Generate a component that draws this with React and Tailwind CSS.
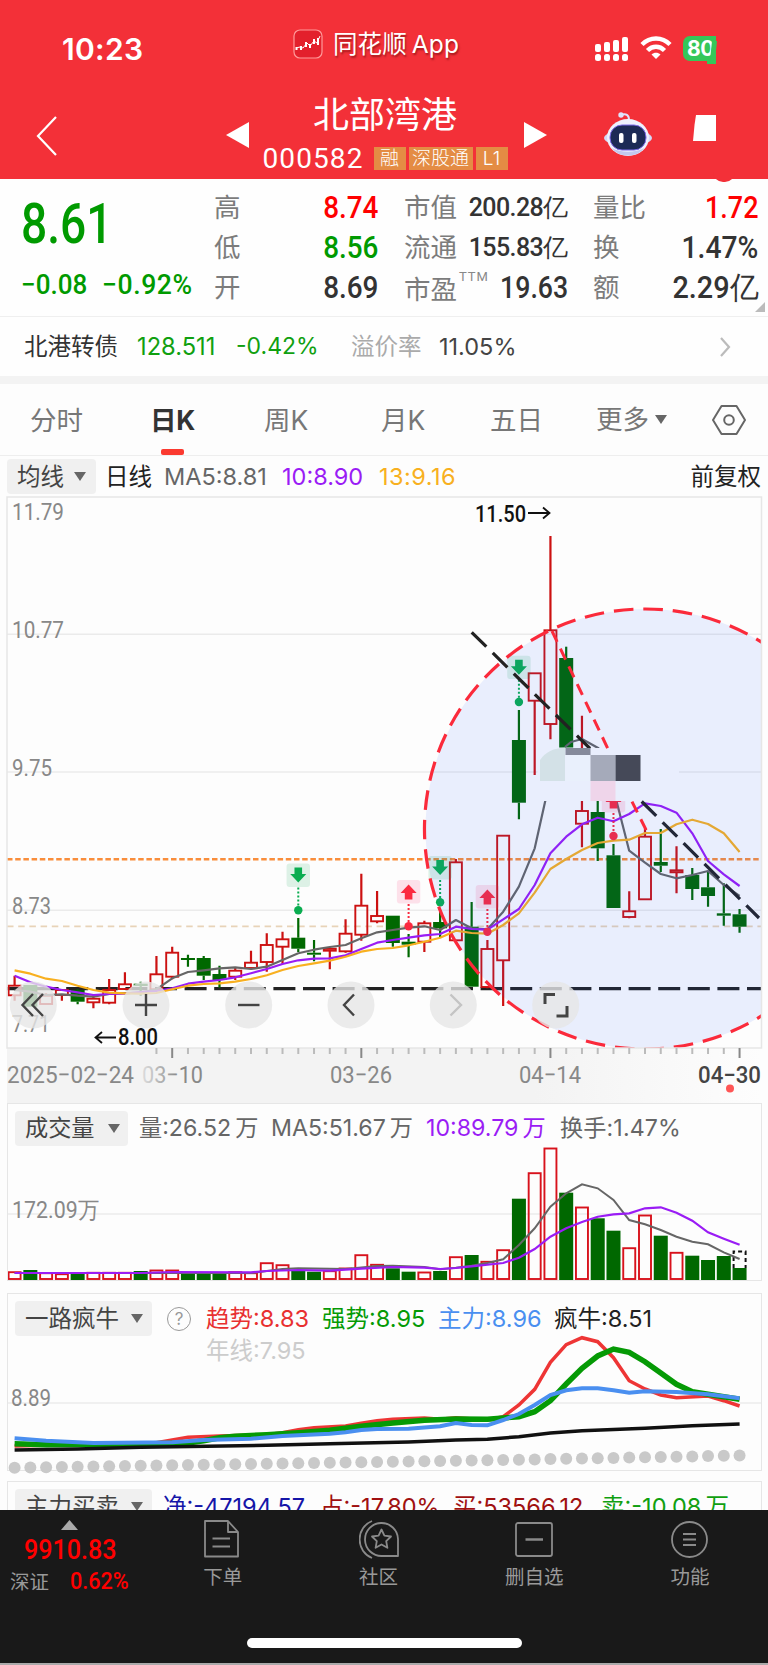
import React from 'react';

const RED = '#cc1111';
const GREEN = '#006800';

// one x slot per trading day
const px = (i) => 14.6 + i * 15.76;

// [up?, high, bodyTop, bodyBottom, low]
const candles = [
  [1, 975.7, 985.7, 995.3, 1000.7],
  [0, 985, 985, 1006.7, 1006.7],
  [1, 993.3, 995.7, 1004, 1004],
  [1, 989.3, 990, 995, 1000.7],
  [0, 989.3, 990, 1001.7, 1004.3],
  [1, 994, 998.7, 1002.3, 1008.3],
  [1, 979, 990, 1002.7, 1004.3],
  [1, 972.3, 984.3, 989, 990],
  [0, 981.7, 983.7, 986, 995.7],
  [1, 956, 974.3, 989.3, 991],
  [1, 946.7, 952.7, 976.7, 979.3],
  [0, 954.7, 958, 960, 966.7],
  [0, 956, 958, 975.7, 980],
  [0, 965.7, 974, 980, 987.7],
  [1, 967.3, 970.7, 976.7, 980],
  [1, 950.7, 962.7, 968, 969.3],
  [1, 933.3, 945, 962, 971.7],
  [1, 931.7, 939.3, 946.7, 964],
  [0, 918, 937.7, 948.7, 952],
  [0, 940, 952.7, 954.7, 961.3],
  [1, 947.3, 948.7, 950.7, 969.3],
  [1, 919.3, 933.7, 951.3, 952.7],
  [1, 873.7, 905.7, 934.7, 940.7],
  [1, 891, 916, 921.3, 923.3],
  [0, 915.7, 915.7, 943, 946.7],
  [0, 934, 941.7, 944.7, 957.3],
  [1, 920.7, 923.3, 941.7, 952],
  [0, 910, 922, 928.3, 937.3],
  [1, 859, 862.3, 940.3, 941.7],
  [0, 902, 926.7, 986.7, 986.7],
  [1, 940, 949, 987, 988.3],
  [1, 835.7, 835.7, 960.3, 1006],
  [0, 710, 740, 802.7, 819.3],
  [1, 673.3, 673.3, 700.7, 775],
  [1, 536, 630.3, 724, 739.3],
  [0, 646.7, 658, 747.5, 747.5],
  [1, 715.7, 811, 823.7, 847.3],
  [0, 801, 812, 848.3, 861],
  [0, 844, 855.3, 908, 908],
  [1, 891.3, 911.3, 917, 918.3],
  [1, 828.3, 836.7, 899.3, 900],
  [0, 829, 862, 865.7, 872],
  [1, 846.3, 870.3, 872.3, 893.3],
  [0, 868, 875, 889, 900],
  [0, 871.7, 887.3, 896, 906.7],
  [0, 883.3, 913.3, 915.7, 925.7],
  [0, 909, 914.3, 926.7, 932.7],
];

const ma5 = [990, 991.7, 995, 994.3, 995.7, 996.7, 994, 993, 992.7, 989.3, 978.3, 972, 970.3, 968.3, 967.3, 969, 966.7, 960, 953.3, 949.7, 947, 945, 938.3, 932.3, 930, 927.7, 926.3, 930, 920, 928.3, 929.3, 911.7, 886.7, 848.3];
const ma5Tail = [850.7, 862.7, 874, 878.3, 875, 871, 885, 896];
const ma10 = [975.7, 982.3, 986.7, 990, 992.3, 995, 994, 993.7, 992, 991, 988.3, 983.7, 981.7, 980, 977.3, 973.3, 969, 964, 960.3, 958.7, 958.3, 955.3, 949, 942.7, 940, 937.7, 935.3, 934, 926.7, 929, 929.7, 919.3, 909, 885, 853.3, 836.7, 824.3, 817.7, 821.3, 814, 803.3, 806, 812.7, 833.3, 861, 874.3, 886];
const ma13 = [970.3, 973.7, 978.7, 981, 985.7, 990, 992.7, 993.3, 993.7, 993, 989.3, 985.7, 984, 983.3, 981.7, 979, 975.3, 970, 966, 963.3, 960.7, 956.7, 951.7, 949, 948, 945.3, 941.7, 937.7, 930.7, 933, 933.7, 925, 913.3, 892.7, 869, 859, 850, 843, 840.7, 839.7, 833, 833, 824.3, 819.7, 824, 833.3, 852];

const signals = [
  { i: 18, box: 863.5, dot: 910.3, buy: false },
  { i: 27, box: 856, dot: 902.3, buy: false },
  { i: 32, box: 655.7, dot: 702, buy: false },
  { i: 25, box: 880, dot: 926.3, buy: true },
  { i: 30, box: 885, dot: 931.7, buy: true },
  { i: 38, box: 789, dot: 836, buy: true },
];

const volumes = [8.3, 10, 7.3, 6.3, 7, 7.7, 7.7, 7.7, 9, 10, 10, 7.7, 7.7, 7.7, 8.3, 7.3, 17.3, 15.3, 9.3, 8.3, 9.3, 12, 25.3, 15.7, 11.7, 8.3, 8, 9, 23.3, 25, 18.7, 30.3, 81.3, 107.3, 132, 87.3, 73, 61.7, 49.3, 32.3, 65, 44.3, 27.7, 24.3, 20, 24, 12];
const volMa5 = [[0, 7], [15, 7], [16, 9], [17, 11], [18, 11.7], [21, 11], [23, 14], [24, 14.3], [26, 13], [27, 10.7], [28, 12.3], [29, 14.3], [30, 17], [31, 20.7], [32, 35], [33, 51.7], [34, 73.3], [35, 86.7], [36, 95.7], [37, 91.7], [38, 80], [39, 60], [40, 55.7], [41, 50], [42, 43.3], [43, 38.3], [44, 35.7], [45, 27.7], [46, 21]];
const volMa10 = [[0, 7], [8, 7], [10, 8], [15, 7.7], [16, 9], [18, 10], [20, 9.3], [22, 11.3], [24, 13], [26, 12.3], [27, 11], [28, 12], [29, 13.7], [31, 17], [32, 22.3], [33, 31], [34, 43.3], [35, 51.7], [36, 58], [37, 63.3], [38, 65.7], [39, 66.7], [40, 71.7], [41, 72.7], [42, 67.3], [43, 59.3], [44, 47.7], [45, 41.3], [46, 35.3]];

const trend = [[0, 1446], [5, 1444], [9, 1442.7], [10, 1440], [11, 1437.3], [13, 1436], [16, 1434.7], [17, 1432.7], [18, 1429.7], [19, 1427.7], [21, 1426], [22, 1423.3], [23, 1420.7], [24, 1419.3], [26, 1418], [27, 1419.3], [28, 1417.7], [30, 1420], [31, 1416.7], [32, 1405], [33, 1389.3], [34, 1362.3], [35, 1344.7], [36, 1337.7], [37, 1341.7], [38, 1357.7], [39, 1380.7], [40, 1389], [41, 1395], [42, 1397.7], [44, 1396], [45, 1400.7], [46, 1406]];
const strong = [[0, 1443.7], [2, 1444.7], [8, 1444], [11, 1443], [12, 1440.7], [13, 1437.7], [14, 1436.3], [16, 1434.7], [18, 1432.7], [20, 1430.3], [22, 1426.3], [24, 1423], [26, 1420.3], [28, 1419], [30, 1419.3], [32, 1416.7], [33, 1411.7], [34, 1400.7], [35, 1384], [36, 1368.3], [37, 1356], [38, 1349], [39, 1352.3], [40, 1361.7], [41, 1373], [42, 1384.3], [43, 1391.7], [44, 1394.3], [45, 1396.7], [46, 1399.3]];
const main = [[0, 1438.3], [2, 1440.7], [4, 1442.3], [5, 1443], [10, 1442.3], [12, 1440], [15, 1438.7], [17, 1436], [20, 1433.7], [21, 1432.3], [22, 1430], [23, 1429], [25, 1428.7], [27, 1426.3], [28, 1423], [29, 1425], [30, 1425.3], [31, 1420], [32, 1414], [33, 1405], [34, 1395], [35, 1390.3], [36, 1388.3], [37, 1388.3], [38, 1390.3], [39, 1392.7], [40, 1391.3], [42, 1392], [44, 1394.3], [46, 1398.3]];
const bull = [[0, 1450], [4, 1449], [8, 1447.3], [16, 1445.3], [20, 1443.7], [25, 1442], [28, 1440], [30, 1439.3], [32, 1436.7], [34, 1433], [36, 1430.7], [40, 1428.3], [43, 1425.7], [46, 1424]];

const path = (ys, start = 0) => ys.map((y, i) => `${px(i + start).toFixed(1)},${y}`).join(' ');
const pairs = (pts) => pts.map(([i, y]) => `${px(i).toFixed(1)},${y}`).join(' ');
const volPairs = (pts) => pts.map(([i, h]) => `${px(i).toFixed(1)},${1280 - h}`).join(' ');

const num = 'font-[Roboto,sans-serif]';

// condensed figures, pinned to the left or right edge of their cell
function Num({ children, right, squeeze = 'scale-x-[0.9]', className = '' }) {
  return (
    <span className={`${num} inline-block whitespace-nowrap ${squeeze} ${right ? 'origin-right' : 'origin-left'} ${className}`}>
      {children}
    </span>
  );
}

function Caret({ className = '' }) {
  return (
    <svg viewBox="0 0 12 9" className={`shrink-0 w-[12px] h-[9px] ${className}`}>
      <path d="M0 0H12L6 9Z" fill="#666" />
    </svg>
  );
}

// the 万 unit stands a little apart from its figure
function Wan() {
  return <span className="ml-[4px]">万</span>;
}

function StatusBar() {
  return (
    <div className="flex items-start h-[84px] pt-[29px] text-white">
      <div className="w-[231px] ml-[62px] pt-[1px] text-[30px] leading-[38px] font-semibold tracking-[0.3px]">10:23</div>
      <svg viewBox="0 0 30 30" className="w-[30px] h-[30px] shrink-0">
        <rect x="1" y="1" width="28" height="28" rx="6" fill="#e3202c" stroke="#ff9a9a" strokeWidth="1.2" />
        <path d="M3 19L7 18L10 19L14 14L17 17L21 12L24 14L27 7" fill="none" stroke="#fff" strokeWidth="1" />
        <path d="M3.500 18v3M8 17v4M13 13v5M17 15v4M21 10v5M25 9v7" stroke="#fff" strokeWidth="2" />
      </svg>
      <div className="w-[261px] ml-[10px] text-[24.5px] leading-[31px] tracking-[0.1px] [text-shadow:1px_2px_2px_rgba(80,0,0,0.5)]">
        同花顺<span className="ml-[5px]">App</span>
      </div>
      <svg viewBox="0 0 36 26" className="w-[36px] h-[26px] mt-[7px] shrink-0" fill="#fff">
        <rect x="1" y="8" width="6" height="8" rx="2" />
        <rect x="10" y="6" width="6" height="10" rx="2" />
        <rect x="19" y="4" width="6" height="12" rx="2" />
        <rect x="28" y="1" width="6" height="15" rx="2" />
        <rect x="1" y="18" width="6" height="7" rx="2.5" />
        <rect x="10" y="18" width="6" height="7" rx="2.5" />
        <rect x="19" y="18" width="6" height="7" rx="2.5" />
        <rect x="28" y="18" width="6" height="7" rx="2.5" />
      </svg>
      <svg viewBox="0 0 32 25" className="w-[32px] h-[25px] ml-[10px] mt-[6px] shrink-0" fill="none" stroke="#fff" strokeWidth="4.5">
        <path d="M2 9.5C10 1.500 22 1.500 30 9.500" />
        <path d="M7.500 15.500C12.500 10.500 19.500 10.500 24.500 15.500" />
        <path d="M16 24L11.500 19.500C14 17.300 18 17.300 20.500 19.500Z" fill="#fff" stroke="none" />
      </svg>
      <div className="relative w-[33px] h-[25px] ml-[11px] mt-[7px] rounded-l-[7px] bg-[#35c759] pl-[4px] text-[21px] leading-[25px] font-bold tracking-[-0.5px]">
        80
        <div className="absolute right-0 top-[5px] w-[5px] h-[19px] bg-[#35c759] -skew-x-6" />
        <div className="absolute right-0 top-[24px] w-[9px] h-[4px] bg-[#35c759]" />
      </div>
    </div>
  );
}

function TitleBar() {
  return (
    <div className="relative flex items-start h-[96px] text-white">
      <svg viewBox="0 0 24 42" className="w-[24px] h-[42px] ml-[35px] mt-[31px] shrink-0">
        <path d="M21 2L3 21L21 40" fill="none" stroke="#fff" strokeWidth="2.2" />
      </svg>
      <svg viewBox="0 0 23 26" className="w-[23px] h-[26px] ml-[167px] mt-[38px] shrink-0"><path d="M23 0V26L0 13Z" fill="#fff" /></svg>
      <div className="w-[275px] flex flex-col items-center pr-[3px]">
        <div className="mt-[9px] text-[36px] leading-[44px]">北部湾港</div>
        <div className="flex items-center gap-[3px] mt-[10px] text-[19px] leading-[23px]">
          <span className={`w-[108px] text-[28px] tracking-[1.1px] ${num}`}>000582</span>
          <span className="w-[32px] h-[23px] bg-[#e48c44] text-center font-light">融</span>
          <span className="w-[64px] h-[23px] bg-[#e48c44] text-center font-light">深股通</span>
          <span className="w-[32px] h-[23px] bg-[#e48c44] text-center font-light">L1</span>
        </div>
      </div>
      <svg viewBox="0 0 23 26" className="w-[23px] h-[26px] mt-[38px] shrink-0"><path d="M0 0V26L23 13Z" fill="#fff" /></svg>
      <svg viewBox="0 0 48 46" className="w-[48px] h-[46px] ml-[57px] mt-[27px] shrink-0">
        <path d="M17 4C22 2 25 4 25 9" fill="none" stroke="#dfe3fb" strokeWidth="2" />
        <circle cx="17" cy="4" r="2.700" fill="#dfe3fb" />
        <ellipse cx="24" cy="27" rx="24" ry="8" fill="#d3d9f7" />
        <ellipse cx="24" cy="26.500" rx="21" ry="18.500" fill="#eef1fd" />
        <path d="M8 37C14 47 34 47 40 37C32 42 16 42 8 37Z" fill="#c3c8ef" />
        <rect x="6" y="14" width="36" height="25" rx="12" fill="#1c2a55" stroke="#7c6be8" strokeWidth="1" />
        <rect x="15" y="22" width="4.500" height="10" rx="2" fill="#fff" />
        <rect x="28" y="22" width="4.500" height="10" rx="2" fill="#fff" />
      </svg>
      <svg viewBox="0 0 23 26" className="w-[23px] h-[26px] ml-[41px] mt-[31px] shrink-0"><path d="M3 0H23V26H0L1.500 10Z" fill="#fff" /></svg>
      <div className="absolute left-[713px] bottom-[-2px] w-[22px] h-[10px] rounded-b-full bg-[#f33038]" />
    </div>
  );
}

function Row({ label, value, className, lw, sup, small, squeeze }) {
  return (
    <div className="flex items-center h-[40px] whitespace-nowrap">
      <span className={`text-[26.5px] text-[#7c7c7c] font-normal ${lw} ${sup ? 'pt-[3px]' : ''}`}>{label}</span>
      {sup && <span className={`${num} mb-[22px] text-[13px] text-[#888] font-normal tracking-[1px]`}>{sup}</span>}
      <span className={`flex-1 flex justify-end ${className}`}>
        {small
          ? <span className={`${num} text-[25px] tracking-[-0.6px] -mr-[1px] pr-[1.500px]`}>{value}</span>
          : <Num right squeeze={squeeze} className="text-[31px]">{value}</Num>}
      </span>
    </div>
  );
}

function Quote() {
  return (
    <div className="relative shrink-0 flex h-[138px] pt-[9px] bg-[#fefefe] border-b border-[#efefef]">
      <div className="w-[192px] pl-[21px] text-[#009a00]">
        <div className="h-[72px] leading-[72px]"><Num squeeze="scale-x-[0.84]" className="text-[55px] font-medium">8.61</Num></div>
        <div className="flex text-[28px] leading-[48px]">
          <div className="w-[82px]"><Num squeeze="scale-x-[0.93]" className="font-medium">−0.08</Num></div>
          <div className="w-[90px]"><Num squeeze="scale-x-[0.95]" className="font-medium tracking-[0.6px]">−0.92%</Num></div>
        </div>
      </div>
      <div className="w-[164px] ml-[22px] font-medium">
        <Row label="高" value="8.74" lw="w-[27px]" className="text-[#f00]" />
        <Row label="低" value="8.56" lw="w-[27px]" className="text-[#009a00]" />
        <Row label="开" value="8.69" lw="w-[27px]" className="text-[#333]" />
      </div>
      <div className="w-[164px] ml-[26px] font-medium text-[#333]">
        <Row label="市值" value="200.28亿" lw="w-[53px]" small />
        <Row label="流通" value="155.83亿" lw="w-[53px]" small />
        <Row label="市盈" value="19.63" lw="w-[57px]" sup="TTM" squeeze="scale-x-[0.86]" />
      </div>
      <div className="w-[165px] ml-[25px] font-medium">
        <Row label="量比" value="1.72" lw="w-[53px]" className="text-[#f00]" squeeze="scale-x-[0.87]" />
        <Row label="换" value="1.47%" lw="w-[27px]" className="text-[#333]" squeeze="scale-x-[0.91]" />
        <Row label="额" value="2.29亿" lw="w-[27px]" className="text-[#333]" squeeze="scale-x-[0.93]" />
      </div>
      <svg viewBox="0 0 10 10" className="absolute right-[3px] bottom-[4px] w-[10px] h-[10px]"><path d="M10 0V10H0Z" fill="#bbb" /></svg>
    </div>
  );
}

function Bond() {
  return (
    <div className="shrink-0 flex items-center h-[59px] pl-[24px] text-[23.500px] bg-[#fefefe] whitespace-nowrap">
      <span className="w-[113px] text-[#333]">北港转债</span>
      <span className="w-[99px] text-[23.700px] text-[#10a010]">128.511</span>
      <span className="w-[115px] text-[23px] text-[#10a010]">-0.42%</span>
      <span className="w-[88px] text-[#aaa]">溢价率</span>
      <span className="w-[280px] text-[23.500px] text-[#444]">11.05%</span>
      <svg viewBox="0 0 12 20" className="w-[12px] h-[20px]"><path d="M2 1L10 10L2 19" fill="none" stroke="#bbb" strokeWidth="2.200" /></svg>
    </div>
  );
}

function Tabs() {
  return (
    <div className="shrink-0 flex h-[72px] pl-[30px] border-b border-[#eee] text-[26.500px] leading-[73px] text-[#777] whitespace-nowrap">
      <span className="w-[120px]">分时</span>
      <span className="relative w-[114px] font-bold text-[#333] tracking-[-0.3px]">
        日K
        <span className="absolute left-[11px] bottom-0 w-[23px] h-[6px] rounded-[2px] bg-[#fb3a30]" />
      </span>
      <span className="w-[117px]">周K</span>
      <span className="w-[109px]">月K</span>
      <span className="w-[106px]">五日</span>
      <span className="w-[116px] flex items-center gap-[6px]">更多<Caret /></span>
      <svg viewBox="0 0 34 30" className="w-[34px] h-[30px] mt-[21px]" fill="none" stroke="#666" strokeWidth="2">
        <path d="M9.500 1H24.500L33 15L24.500 29H9.500L1 15Z" strokeLinejoin="round" />
        <circle cx="17" cy="15" r="4.800" />
      </svg>
    </div>
  );
}

function Picker({ children, className }) {
  return (
    <div className={`shrink-0 flex items-center justify-between h-[35px] pl-[10px] rounded-[4px] bg-[#f0f0f0] text-[#444] ${className}`}>
      {children}<Caret />
    </div>
  );
}

function Signal({ i, box, dot, buy }) {
  const x = px(i);
  const color = buy ? '#fb2a40' : '#0aad50';
  return (
    <g>
      <rect x={x - 11.7} y={box} width="23.400" height="23.400" rx="3" fill={buy ? '#ff2a6a' : '#0aa550'} opacity="0.13" />
      {buy
        ? <path d={`M${x} ${box + 4.5}l8 8.500h-4.200v6.500h-7.600v-6.500h-4.200z`} fill={color} />
        : <path d={`M${x} ${box + 19}l8 -8.500h-4.200v-6.500h-7.600v6.500h-4.200z`} fill={color} />}
      <path d={`M${x} ${box + 24}V${dot}`} stroke={color} strokeWidth="2" strokeDasharray="2 2" />
      <circle cx={x} cy={dot} r="4.200" fill={color} />
    </g>
  );
}

function Label({ x, y, w, children, fill = '#888', size = 24, bold }) {
  return (
    <text x={x} y={y} textLength={w} lengthAdjust="spacingAndGlyphs" fontSize={size} fill={fill} className={`${num} ${bold ? 'font-medium' : ''}`}>{children}</text>
  );
}

function KChart() {
  return (
    <svg viewBox="0 496 768 607" className="block w-[768px] h-[607px]" fill="none">
      <defs>
        <linearGradient id="axis" x1="0" x2="1">
          <stop offset="0" stopColor="#f3f3f3" />
          <stop offset="0.700" stopColor="#f3f3f3" />
          <stop offset="1" stopColor="#fdfdfd" />
        </linearGradient>
        <linearGradient id="fade" x1="0" x2="1">
          <stop offset="0" stopColor="#ddd" />
          <stop offset="0.600" stopColor="#888" />
        </linearGradient>
        <clipPath id="plot"><rect x="7" y="496" width="754" height="552" /></clipPath>
      </defs>
      <rect x="7" y="1048" width="754" height="55" fill="url(#axis)" />
      <path d="M7 634.300H761M7 772H761M7 910.300H761" stroke="#ebebeb" strokeWidth="1.500" />
      <path d="M7 926.300H761" stroke="#e8d3b8" strokeWidth="1.800" strokeDasharray="6.500 4.700" />
      <path d="M7 859.300H761" stroke="#f98d3b" strokeWidth="2.500" strokeDasharray="5.500 2.700" />
      <path d="M7 988.700H761" stroke="#222" strokeWidth="3.200" strokeDasharray="22 7.600" />
      <g clipPath="url(#plot)">
        {candles.map(([up, high, top, bottom, low], i) => (
          <g key={i}>
            <path d={`M${px(i)} ${high}V${top}M${px(i)} ${bottom}V${low}`} stroke={up ? RED : GREEN} strokeWidth="2.200" />
            {up
              ? <rect x={px(i) - 6} y={top} width="12" height={bottom - top} stroke={RED} strokeWidth="1.900" />
              : <rect x={px(i) - 7} y={top} width="14" height={bottom - top} fill={GREEN} />}
          </g>
        ))}
        <g strokeWidth="2.200" strokeLinejoin="round">
          <polyline points={`${path(ma5)} 546.700,794.500`} stroke="#666" />
          <polyline points="565,747 571,742 582,739 599,748.500" stroke="#666" />
          <polyline points={`616.500,801 ${path(ma5Tail, 39)}`} stroke="#666" />
          <polyline points={path(ma10)} stroke="#9a1cf5" />
          <polyline points={path(ma13)} stroke="#f8b020" />
        </g>
        {signals.map((s) => <Signal key={s.i} {...s} />)}
        <circle cx="645.500" cy="829" r="220" fill="#2455ff" fillOpacity="0.09" />
        {/* hidden strip behind the mosaic */}
        <path d="M541 748H640L679 765V801H541V775H537Z" fill="#e9eefd" />
        <path d="M643.300 609A220 220 0 0 0 645.500 1049A220 220 0 0 0 865.500 829" stroke="#fb2a3b" strokeWidth="3.200" strokeDasharray="0 9.950 19.600 0" />
        <path d="M643.300 609A220 220 0 0 1 865.500 829" stroke="#fb2a3b" strokeWidth="3.200" strokeDasharray="19.600 9.950" />
        <path d="M552 631L607.700 748.300" stroke="#fb2a3b" strokeWidth="3" strokeDasharray="12 7.600" />
        <path d="M632 801.700L645.700 829V836" stroke="#fb2a3b" strokeWidth="3" strokeDasharray="12 7.600" />
        <path d="M471.700 632.300L590 748.500" stroke="#222" strokeWidth="3.200" strokeDasharray="20.500 9" />
        <path d="M641.700 801.500L759 918" stroke="#222738" strokeWidth="3.200" strokeDasharray="20.500 9" />
        <path d="M540 781V760Q548 748 565 747.700V781Z" fill="#d3e1e7" />
        <rect x="565.500" y="748" width="25" height="7" fill="#858a9b" />
        <rect x="565.500" y="755" width="25" height="26" fill="#e9f0fc" />
        <rect x="590.500" y="755" width="25" height="26" fill="#a5aaba" />
        <rect x="615.500" y="755" width="25" height="26" fill="#454958" />
        <rect x="590.500" y="781" width="25" height="20" fill="#efd5ea" />
      </g>
      <path d="M7 1048V497H761.500V1048Z" stroke="#e6e6e6" strokeWidth="1.500" />

      <Label x="12" y="519.500" w="52">11.79</Label>
      <Label x="12" y="638" w="52">10.77</Label>
      <Label x="12" y="776" w="40">9.75</Label>
      <Label x="12" y="913.500" w="39">8.73</Label>
      <Label x="12" y="1031.500" w="38">7.71</Label>
      <Label x="475" y="521.500" w="51" fill="#111" bold>11.50</Label>
      <path d="M528 513H549M543 507.500L549.500 513L543 518.500" stroke="#111" strokeWidth="1.800" />
      <path d="M116 1037.500H96M102 1032L95.500 1037.500L102 1043" stroke="#111" strokeWidth="1.800" />
      <Label x="118" y="1045" w="40" fill="#111" bold>8.00</Label>

      {candles.map((c, i) => i > 8 && (
        <path key={i} d={`M${px(i)} 1048V${i % 12 === 10 ? 1058 : 1054}`} stroke={i % 12 === 10 ? '#888' : '#bbb'} strokeWidth="2" />
      ))}
      <Label x="7" y="1082.500" w="127">2025−02−24</Label>
      <Label x="142" y="1082.500" w="61" fill="url(#fade)">03−10</Label>
      <Label x="330" y="1082.500" w="62">03−26</Label>
      <Label x="519" y="1082.500" w="62">04−14</Label>
      <Label x="698" y="1082.500" w="63" fill="#444" bold>04−30</Label>
      <circle cx="730" cy="1088.500" r="4" fill="#f55" />

      <g fill="#e6e6e6" fillOpacity="0.8">
        {[33.3, 146, 248.7, 351, 453.3, 555.7].map((x) => <circle key={x} cx={x} cy="1005" r="23.500" />)}
      </g>
      <g stroke="#444" strokeWidth="2.400">
        <path d="M33 994L22.500 1005L33 1016M43 994L32.500 1005L43 1016" />
        <path d="M135 1005H157M146 994V1016" />
        <path d="M238 1005H259.500" />
        <path d="M354 994.500L344 1005L354 1015.500" />
        <path d="M450.500 994.500L461 1005L450.500 1015.500" stroke="#c4c4c4" />
        <path d="M545 1004V994.500H555M567 1006V1016H556.500" strokeWidth="3" />
      </g>
    </svg>
  );
}

function VolumeBars() {
  return (
    <svg viewBox="8 1147 753 133" className="block shrink-0 w-[753px] h-[133px]" fill="none">
      <path d="M8 1214H761" stroke="#ebebeb" strokeWidth="1.500" />
      <Label x="12" y="1217.500" w="87" size={23}>172.09万</Label>
      {volumes.map((h, i) => (candles[i][0]
        ? <rect key={i} x={px(i) - 6} y={1280.500 - h} width="12" height={h - 1.500} stroke="#d8121c" strokeWidth="1.900" />
        : <rect key={i} x={px(i) - 7} y={1280 - h} width="14" height={h} fill={GREEN} />
      ))}
      <path d="M733.600 1268V1251.500H745.600V1268" stroke="#111" strokeWidth="2" strokeDasharray="4 3" />
      <polyline points={volPairs(volMa5)} stroke="#666" strokeWidth="2" />
      <polyline points={volPairs(volMa10)} stroke="#9a1cf5" strokeWidth="2.200" />
    </svg>
  );
}

function TrendLines() {
  return (
    <svg viewBox="8 1330 753 140" className="block w-[753px] h-[140px] overflow-visible" fill="none">
      <path d="M8 1403H761" stroke="#ebebeb" strokeWidth="1.500" />
      <Label x="11" y="1406" w="40">8.89</Label>
      <polyline points={pairs(trend)} stroke="#ee3535" strokeWidth="3.500" />
      <polyline points={pairs(strong)} stroke="#059a05" strokeWidth="5.500" />
      <polyline points={pairs(main)} stroke="#4a8ff0" strokeWidth="4" />
      <polyline points={pairs(bull)} stroke="#111" strokeWidth="3.500" />
      {candles.map((c, i) => (
        <circle key={i} cx={px(i)} cy={i < 30 ? 1467.800 - i * 0.25 : 1460.300 - (i - 30) * 0.3} r="6" fill="#c9c9c9" />
      ))}
    </svg>
  );
}

const navItems = [
  { label: '下单', icon: <><path d="M2 1H25L35 12V36.500H2Z" /><path d="M25 1V12H35M9.500 18.500H27M9.500 26.500H27" /></> },
  { label: '社区', icon: <><path d="M39 36H23A16.500 16.500 0 1 1 39 19Z" /><path d="M13 1A20 20 0 0 0 13 38" /><path d="M22.500 9.500L25.400 15.700L32 16.500L27.200 21.200L28.400 27.800L22.500 24.500L16.600 27.800L17.800 21.200L13 16.500L19.600 15.700Z" /></> },
  { label: '删自选', icon: <><rect x="2" y="3" width="36" height="33" rx="2" /><path d="M11.500 19.500H29" strokeWidth="2.500" /></> },
  { label: '功能', icon: <><circle cx="19.500" cy="19.500" r="17.500" /><path d="M13 14H26M13 19.500H26M13 25H26" /></> },
];

function BottomNav() {
  return (
    <div className="relative h-[155px] bg-[#191919] border-b-2 border-[#aaa] text-[#999]">
      <div className="flex pt-[10px]">
        <div className="w-[145px]">
          <svg viewBox="0 0 17 10" className="w-[17px] h-[10px] ml-[61px]"><path d="M8.500 0L17 10H0Z" fill="#aaa" /></svg>
          <div className="pl-[24px] text-[27px] leading-[39px] text-[#f00]"><Num squeeze="scale-x-[0.93]" className="font-medium">9910.83</Num></div>
          <div className="flex items-center pl-[10px] text-[19.500px] leading-[24px]">
            <span className="w-[60px]">深证</span>
            <Num squeeze="scale-x-[0.94]" className="text-[23px] font-medium text-[#f00]">0.62%</Num>
          </div>
        </div>
        {navItems.map((item) => (
          <div key={item.label} className="w-[155.700px] flex flex-col items-center">
            <svg viewBox="0 0 40 40" className="w-[40px] h-[40px]" fill="none" stroke="#8a8a8a" strokeWidth="1.800" strokeLinejoin="round">{item.icon}</svg>
            <span className="mt-[4px] text-[19.500px] leading-[26px]">{item.label}</span>
          </div>
        ))}
      </div>
      <div className="absolute left-[247px] bottom-[15px] w-[275px] h-[10px] rounded-full bg-white" />
    </div>
  );
}

export default function App() {
  return (
    <div className="w-[768px] h-[1665px] overflow-hidden flex flex-col bg-[#fdfdfd] font-[Inter,'Noto_Sans_CJK_SC',sans-serif]">
      <header className="h-[179px] shrink-0 bg-[#f33038] relative z-10">
        <StatusBar />
        <TitleBar />
      </header>
      <Quote />
      <Bond />
      <div className="h-[8px] shrink-0 bg-[#f3f3f3]" />
      <Tabs />
      <div className="shrink-0 flex items-center h-[40px] pt-[1px] pl-[7px] pr-[7px] text-[23.500px] whitespace-nowrap">
        <Picker className="w-[89px] pr-[10px] pl-[9px]">均线</Picker>
        <span className="w-[59px] ml-[9px] text-[#222]">日线</span>
        <span className="w-[118px] text-[#666]">MA5:8.81</span>
        <span className="w-[97px] text-[#9a1cf5]">10:8.90</span>
        <span className="tracking-[0.5px] text-[#f8b020]">13:9.16</span>
        <span className="ml-auto text-[#222]">前复权</span>
      </div>
      <div className="shrink-0"><KChart /></div>
      <section className="shrink-0 w-[755px] h-[178px] ml-[7px] border border-[#e6e6e6] flex flex-col">
        <div className="flex items-center h-[35px] mt-[7px] mb-[1px] pl-[7px] text-[23.200px] text-[#666] whitespace-nowrap">
          <Picker className="w-[113px] pr-[8px]">成交量</Picker>
          <span className="w-[132px] ml-[11px]">量:26.52<Wan /></span>
          <span className="w-[155px]">MA5:51.67<Wan /></span>
          <span className="w-[134px] text-[#9a1cf5]">10:89.79<Wan /></span>
          <span className="tracking-[0.1px]">换手:1.47%</span>
        </div>
        <VolumeBars />
      </section>
      <section className="shrink-0 w-[755px] h-[178px] ml-[7px] mt-[12px] border border-[#e6e6e6] relative">
        <div className="absolute inset-x-0 bottom-0"><TrendLines /></div>
        <div className="relative flex items-center h-[35px] mt-[7px] pl-[7px] text-[23.500px] whitespace-nowrap">
          <Picker className="w-[137px] pr-[9px]">一路疯牛</Picker>
          <span className="w-[24px] h-[24px] ml-[15px] mr-[15px] rounded-full border-[1.500px] border-[#999] text-center text-[17px] leading-[22px] text-[#999]">?</span>
          <span className="w-[116px] text-[#e83030]">趋势:8.83</span>
          <span className="w-[116px] text-[#059a05]">强势:8.95</span>
          <span className="w-[116px] text-[#4a8ff0]">主力:8.96</span>
          <span className="text-[#222]">疯牛:8.51</span>
        </div>
        <div className="relative pl-[198px] text-[23.500px] leading-[29px] text-[#ccc]">年线:7.95</div>
      </section>
      <section className="shrink-0 w-[755px] h-[29px] overflow-hidden ml-[7px] mt-[10px] border border-b-0 border-[#e6e6e6]">
        <div className="flex items-center h-[35px] mt-[7px] pl-[7px] text-[23.500px] whitespace-nowrap">
          <Picker className="w-[137px] pr-[9px]">主力买卖</Picker>
          <span className="w-[157px] ml-[11px] text-[#1515a8]">净:-47194.57</span>
          <span className="w-[133px] text-[#a01010]">占:-17.80%</span>
          <span className="w-[148px] text-[#a01010]">买:53566.12</span>
          <span className="text-[#10a010]">卖:-10.08<Wan /></span>
        </div>
      </section>
      <div className="shrink-0 mt-auto"><BottomNav /></div>
    </div>
  );
}
